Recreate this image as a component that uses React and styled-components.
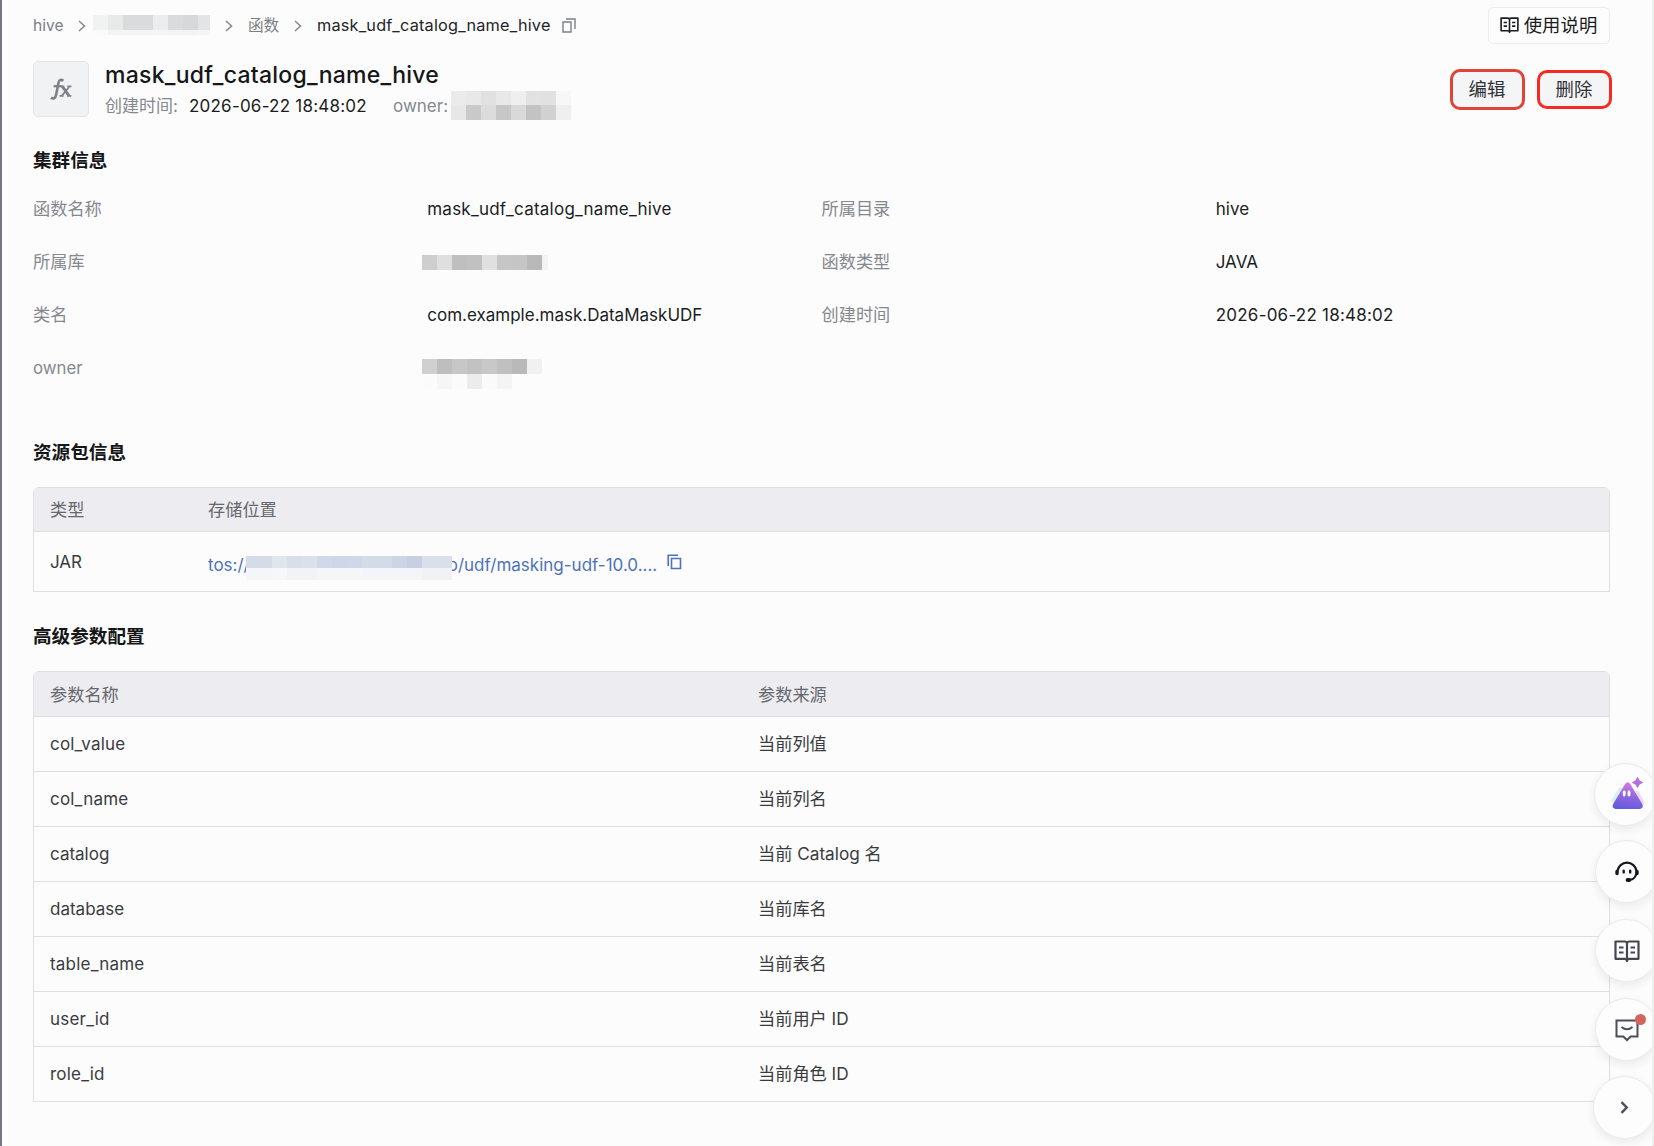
import React from "react"
import styled, { createGlobalStyle, css } from "styled-components"

const GlobalStyle = createGlobalStyle`
  * {
    box-sizing: border-box;
  }
  body {
    margin: 0;
    overflow: hidden;
    background: #fcfcfc;
    color: #1b1c1f;
    font-family: Inter, "Noto Sans CJK SC", sans-serif;
    font-size: 17px;
  }
`

const Page = styled.div`
  position: relative;
  height: 1146px;
  padding: 0 42px 0 31px;
  border-left: 2px solid #78777e;
  border-right: 2px solid #f0f0f1;
  overflow: hidden;
`

const TopBar = styled.div`
  display: flex;
  align-items: center;
  justify-content: space-between;
  padding-top: 6px;
  height: 44px;
`

const Breadcrumb = styled.nav`
  display: flex;
  align-items: center;
  padding-top: 1px;
  font-size: 15.6px;
  line-height: 20px;
  color: #7c7f87;
`

const Crumb = styled.span`
  width: ${props => props.$width}px;
  white-space: nowrap;
  ${props =>
    props.$current &&
    css`
      color: #232428;
      font-size: 16.3px;
      letter-spacing: 0.2px;
      padding-bottom: 1px;
    `}
`

const Separator = styled.svg`
  flex: none;
  width: 8px;
  height: 12px;
  margin: 0 15px;
`

const HelpButton = styled.button`
  display: flex;
  align-items: center;
  justify-content: center;
  gap: 5px;
  width: 122px;
  height: 37px;
  padding: 0 1px 2px 0;
  border: 1px solid #ececee;
  border-radius: 5px;
  background: #fdfdfd;
  color: #1b1c1f;
  font: inherit;
  font-size: 18.4px;

  svg {
    margin-top: 2px;
  }
`

const Header = styled.header`
  display: flex;
  align-items: flex-start;
  padding-top: 17px;
  height: 88px;
`

const FunctionTile = styled.div`
  display: flex;
  align-items: center;
  justify-content: center;
  width: 56px;
  height: 56px;
  margin-right: 16px;
  border: 1px solid #e3e4e8;
  border-radius: 5px;
  background: #f1f2f4;
`

const Summary = styled.div`
  flex: 1;
`

const Title = styled.h1`
  margin: 0;
  font-size: 23px;
  font-weight: 500;
  letter-spacing: 0.25px;
  line-height: 28px;
  color: #151618;
`

const Meta = styled.div`
  display: flex;
  align-items: center;
  height: 32px;
`

const MetaItem = styled.span`
  width: ${props => props.$width}px;
  padding-top: 1px;
  color: ${props => (props.$muted ? "#85888f" : "#1b1c1f")};
  letter-spacing: ${props => props.$tracking || 0}px;
  line-height: 24px;
  white-space: nowrap;
`

const Actions = styled.div`
  display: flex;
  align-items: center;
  gap: 12px;
  margin: 8px -2px 0 0;
`

const ActionButton = styled.button`
  width: 75px;
  height: ${props => props.$height}px;
  padding: 0 1px 3px 0;
  border: 3px solid ${props => props.$color};
  border-radius: 10px;
  background: #f4f5f7;
  color: #303136;
  font: inherit;
  font-size: 18.4px;
`

const Heading = styled.h2`
  margin: 0;
  font-size: 18.6px;
  font-weight: 600;
  line-height: 56px;
  color: #151618;
`

const Details = styled.dl`
  display: grid;
  grid-template-columns: repeat(4, 1fr);
  grid-auto-rows: 53px;
  align-items: center;
  margin: -6px 0 30px;
`

const Label = styled.dt`
  padding-bottom: ${props => (props.$latin ? 0 : 3)}px;
  font-size: ${props => (props.$latin ? 16.8 : 17.2)}px;
  color: #85888f;
`

const Value = styled.dd`
  margin: 0;
  letter-spacing: ${props => props.$tracking || 0}px;
`

const Pixels = styled.div`
  position: relative;
  display: grid;
  grid-template-columns: ${props => props.$columns};
  grid-auto-rows: ${props => props.$row}px;
  flex: none;
  margin: ${props => props.$margin || 0};
`

const Pixel = styled.span`
  background: ${props => props.$color};
`

const Table = styled.div`
  border: 1px solid #dfdfe2;
  border-radius: 6px 6px 0 0;
  margin: 7px 0 ${props => props.$gap || 0}px;
  overflow: hidden;
`

const Row = styled.div`
  display: grid;
  grid-template-columns: ${props => props.$columns} 1fr;
  align-items: center;
  height: ${props => props.$height || 55}px;
  padding-left: 16px;
  color: #3a3b3f;
  ${props =>
    props.$head
      ? css`
          padding-bottom: 2px;
          background: #edecf1;
          color: #66686e;
          font-size: 17.2px;
        `
      : css`
          border-top: 1px solid #dfdfe2;
        `}
`

const ParamName = styled.span`
  letter-spacing: ${props => (props.$wide ? 0.2 : 0)}px;
`

const ParamSource = styled.span`
  padding-bottom: 3px;
  font-size: 17.2px;
`

const Location = styled.a`
  display: flex;
  align-items: center;
  padding-top: 6px;
  color: #4f72bd;
  white-space: nowrap;
`

const LinkIcon = styled.svg`
  margin: -5px 0 0 10px;
`

const Dock = styled.aside`
  position: absolute;
  top: 763px;
  right: -6px;
  display: flex;
  flex-direction: column;
  gap: 16px;
`

const DockButton = styled.button`
  position: relative;
  display: flex;
  align-items: center;
  justify-content: center;
  width: 63px;
  height: 63px;
  padding: ${props => props.$padding || "0 0 0 1px"};
  border: 1px solid #e9eaed;
  border-radius: 50%;
  background: #fdfdfd;
  box-shadow: 0 4px 10px rgba(30, 34, 50, 0.08);
  margin: ${props => props.$margin || 0};
`

const Badge = styled.span`
  position: absolute;
  top: 15px;
  right: 11px;
  width: 11px;
  height: 11px;
  border-radius: 50%;
  background: #d2665f;
`

const Chevron = () => (
  <Separator viewBox="0 0 8 12" fill="none" stroke="#85888f" strokeWidth="1.6">
    <path d="M1 1l5.5 5L1 11" />
  </Separator>
)

const CopyOutline = () => (
  <svg width="14" height="15" viewBox="0 0 14 15" fill="none" stroke="#7c7f87" strokeWidth="1.4">
    <path d="M1 4h8v10H1z" />
    <path d="M4 1h9v10" />
  </svg>
)

const CopyLink = () => (
  <LinkIcon width="15" height="16" viewBox="0 0 15 16" fill="none" stroke="#4f72bd" strokeWidth="1.6">
    <path d="M4.5 4.5h9v10h-9z" />
    <path d="M1.2 12V1.2H11" />
  </LinkIcon>
)

const Book = ({ size, color = "#1b1c1f" }) => (
  <svg width={size} height={(size * 22) / 26} viewBox="0 0 26 22" fill="none" stroke={color} strokeWidth="2.2" strokeLinejoin="round">
    <path d="M1.5 1.5h9.2Q13 1.5 13 3.8 13 1.5 15.3 1.5h9.2v17.3h-9.2Q13 18.8 13 21 13 18.8 10.7 18.8H1.5zM13 3.8V21" />
    <path d="M5 7.5h4.5M5 12.5h4.5M16.5 7.5H21M16.5 12.5H21" />
  </svg>
)

const FunctionIcon = () => (
  <svg width="22" height="22" viewBox="0 0 22 22" fill="none" stroke="#7d808a">
    <path d="M13.4 2.8C10.3.6 8.9 2.7 8.3 5.5L6.2 16.5C5.5 20.2 3.5 21.4 1 19.6" strokeWidth="2.6" />
    <path d="M3.6 8.2h8" strokeWidth="2.2" />
    <path d="M12.4 8.5l6.4 9" strokeWidth="3" />
    <path d="M19.6 8.3l-7.8 9.6M10.6 8.3h3.6M17.4 8.3h4M9.6 17.8h4M17 17.8h4.4" strokeWidth="1.7" />
  </svg>
)

const Assistant = () => (
  <svg width="34" height="34" viewBox="0 0 34 34">
    <defs>
      <linearGradient id="peak" x1="0.6" y1="0" x2="0.4" y2="1">
        <stop offset="0" stopColor="#d67be0" />
        <stop offset="0.5" stopColor="#9466df" />
        <stop offset="1" stopColor="#625be0" />
      </linearGradient>
    </defs>
    <path d="M8 11q2-2 4 1l7 13-16 1q-4-1-2-4z" fill="#d9eff5" />
    <path d="M25 14q2-1 3 1l5 9q1 4-3 5l-9-1z" fill="#eadcf8" />
    <path d="M13.8 7.5q2.9-4.3 5.8 0l11.6 19.6q2 4.3-2.4 4.8H4.6q-4.4-.5-2.4-4.8z" fill="url(#peak)" />
    <path d="M13.2 15v3M18 15v3" stroke="#fff" strokeWidth="2.8" strokeLinecap="round" />
    <path d="M26.5.5q1 4.2 5 5-4 1-5 5-1-4-5-5 4-.8 5-5z" fill="#b56cdc" stroke="#b56cdc" strokeLinejoin="round" />
  </svg>
)

const Headset = () => (
  <svg width="24" height="24" viewBox="0 0 24 24" fill="none" stroke="#17181c" strokeWidth="2.2" strokeLinecap="round">
    <path d="M2.4 12a9.7 9.7 0 0 1 19.2 0c0 5-3 8.7-7.3 9.2" />
    <path d="M2 12.5v2M22 12.5v2" strokeWidth="3.4" />
    <path d="M8.7 11.8v1.6M15.2 11.8v1.6" strokeWidth="2.4" />
    <path d="M12.6 21h1.6" strokeWidth="4" />
  </svg>
)

const Feedback = () => (
  <svg width="24" height="24" viewBox="0 0 24 24" fill="none" stroke="#4b4f59" strokeWidth="2">
    <path d="M1.5 2.5h21v16h-6.8L12 22l-3.7-3.5H1.5z" />
    <path d="M6.5 9q5.5 4.5 11 0" />
  </svg>
)

const More = () => (
  <svg width="9" height="13" viewBox="0 0 9 13" fill="none" stroke="#4b4f59" strokeWidth="2.4">
    <path d="M1.5 1.2l5.2 5.3-5.2 5.3" />
  </svg>
)

const Mosaic = ({ columns, row, margin, colors }) => (
  <Pixels $columns={columns} $row={row} $margin={margin}>
    {colors.map((color, i) => (
      <Pixel key={i} $color={color} />
    ))}
  </Pixels>
)

const crumbPixels = [
  "#f1f2f2", "#e8eaea", "#d9dbdc", "#d9dbdc", "#eceeee", "#d9dbdc", "#d6d8d9", "#e2e4e5",
]

const crumbShadowPixels = [
  "#fbfbfb", "#f4f4f4", "#f3f4f4", "#f3f4f4", "#f6f6f6", "#f3f3f3", "#f3f3f3", "#f5f5f5",
]

const CrumbMosaic = styled.div`
  margin: -1px 0 0 -8px;
`

const ownerPixels = [
  "#ebebeb", "#e8e8e8", "#e1e1e1", "#e8e8e8", "#efefef", "#e2e2e2", "#e1e1e1", "#f7f7f7",
  "#e7e7e7", "#c9c9c9", "#dcdcdc", "#c7c7c7", "#d9d9d9", "#c3c3c3", "#d1d1d1", "#efefef",
]

const databasePixels = [
  "#cecece", "#dfdfdf", "#bfbfbf", "#c1c1c1", "#e0e0e0", "#c6c6c6", "#c5c5c5", "#b9b9b9", "#f3f3f3",
]

const ownerDetailPixels = [
  "#d0d0d0", "#bebebe", "#c7c7c7", "#c2c2c2", "#c8c8c8", "#c0c0c0", "#b9b9b9", "#f1f1f1",
  "#fbfbfb", "#f6f6f6", "#fbfbfb", "#ececec", "#fafafa", "#f4f4f4", "#fcfcfc", "#fcfcfc",
]

const bucketPixels = [
  "#d5dce9", "#d5dce8", "#e0e5ee", "#d8dfea", "#dbe1ec", "#cfd9e9", "#cdd7e8", "#ced8e8", "#d2dbe9", "#d3dbe9", "#cbd5e6", "#c7d0e2", "#d9e0ea", "#d9e0ea",
  "#f5f6f9", "#f5f6f9", "#f6f7f9", "#f1f3f7", "#f1f3f7", "#f4f6f8", "#f4f6f8", "#f4f6f8", "#f3f5f8", "#f3f5f8", "#f3f5f8", "#f3f5f8", "#f0f2f6", "#f0f2f6",
]

const params = [
  ["col_value", "当前列值"],
  ["col_name", "当前列名"],
  ["catalog", "当前 Catalog 名"],
  ["database", "当前库名"],
  ["table_name", "当前表名"],
  ["user_id", "当前用户 ID"],
  ["role_id", "当前角色 ID"],
]

const App = () => (
  <>
    <GlobalStyle />
    <Page>
      <TopBar>
        <Breadcrumb>
          <Crumb $width={30}>hive</Crumb>
          <Chevron />
          <CrumbMosaic>
            <Mosaic columns="repeat(7, 15px) 12px" row={15} colors={crumbPixels} />
            <Mosaic columns="repeat(7, 15px) 12px" row={5} colors={crumbShadowPixels} />
          </CrumbMosaic>
          <Chevron />
          <Crumb $width={31}>函数</Crumb>
          <Chevron />
          <Crumb $width={245} $current>mask_udf_catalog_name_hive</Crumb>
          <CopyOutline />
        </Breadcrumb>
        <HelpButton>
          <Book size={19} />
          使用说明
        </HelpButton>
      </TopBar>
      <Header>
        <FunctionTile>
          <FunctionIcon />
        </FunctionTile>
        <Summary>
          <Title>mask_udf_catalog_name_hive</Title>
          <Meta>
            <MetaItem $width={84} $muted>创建时间:</MetaItem>
            <MetaItem $width={204} $tracking={0.22}>2026-06-22 18:48:02</MetaItem>
            <MetaItem $width={58} $muted>owner:</MetaItem>
            <Mosaic columns="repeat(8, 15px)" row={14.5} colors={ownerPixels} />
          </Meta>
        </Summary>
        <Actions>
          <ActionButton $height={41} $color="#e04434">编辑</ActionButton>
          <ActionButton $height={39} $color="#f52a22">删除</ActionButton>
        </Actions>
      </Header>

      <Heading>集群信息</Heading>
      <Details>
        <Label>函数名称</Label>
        <Value $tracking={0.23}>mask_udf_catalog_name_hive</Value>
        <Label>所属目录</Label>
        <Value>hive</Value>
        <Label>所属库</Label>
        <Mosaic columns="repeat(8, 15px) 6px" row={15} margin="1px 0 0 -5px" colors={databasePixels} />
        <Label>函数类型</Label>
        <Value>JAVA</Value>
        <Label>类名</Label>
        <Value>com.example.mask.DataMaskUDF</Value>
        <Label>创建时间</Label>
        <Value $tracking={0.22}>2026-06-22 18:48:02</Value>
        <Label $latin>owner</Label>
        <Mosaic columns="repeat(8, 15px)" row={15} margin="13px 0 0 -5px" colors={ownerDetailPixels} />
      </Details>

      <Heading>资源包信息</Heading>
      <Table $gap={16}>
        <Row $head $columns="158px" $height={43}>
          <span>类型</span>
          <span>存储位置</span>
        </Row>
        <Row $columns="158px" $height={60}>
          <span>JAR</span>
          <Location>
            tos://
            <Mosaic columns="11px repeat(13, 15px)" row={12} margin="7px -4px 0 -4px" colors={bucketPixels} />
            o/udf/masking-udf-10.0....
            <CopyLink />
          </Location>
        </Row>
      </Table>

      <Heading>高级参数配置</Heading>
      <Table>
        <Row $head $columns="708px" $height={44}>
          <span>参数名称</span>
          <span>参数来源</span>
        </Row>
        {params.map(([name, source]) => (
          <Row key={name} $columns="708px">
            <ParamName $wide={name.includes("_")}>{name}</ParamName>
            <ParamSource>{source}</ParamSource>
          </Row>
        ))}
      </Table>

      <Dock>
        <DockButton $margin="0 0 -2px -1px" $padding="0 0 2px 4px">
          <Assistant />
        </DockButton>
        <DockButton $padding="0 0 2px 1px">
          <Headset />
        </DockButton>
        <DockButton>
          <Book size={26} color="#45474e" />
        </DockButton>
        <DockButton>
          <Feedback />
          <Badge />
        </DockButton>
        <DockButton $margin="-1px 0 0 -2px" $padding="0">
          <More />
        </DockButton>
      </Dock>
    </Page>
  </>
)

export default App
